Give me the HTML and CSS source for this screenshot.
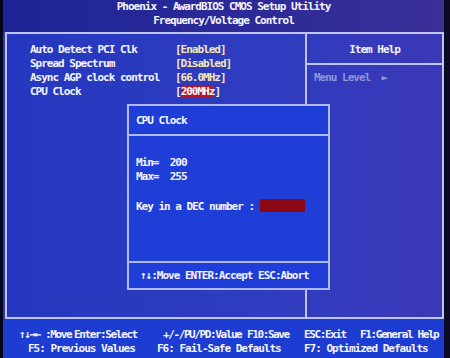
FILE: index.html
```html
<!DOCTYPE html>
<html lang="en">

<head>
    <meta charset="UTF-8">
    <meta name="viewport" content="width=device-width, initial-scale=1.0">
    <title>Frequency/Voltage Control</title>
    <link rel="stylesheet" href="styles.css">
</head>

<body>
    <div class="screen">
        <header class="title">
            <div>Phoenix - AwardBIOS CMOS Setup Utility</div>
            <div>Frequency/Voltage Control</div>
        </header>

        <main class="frame">
            <section class="items">
                <div class="row"><span class="name">Auto Detect PCI Clk</span><span class="val">[Enabled]</span></div>
                <div class="row"><span class="name">Spread Spectrum</span><span class="val">[Disabled]</span></div>
                <div class="row"><span class="name">Async AGP clock control</span><span class="val">[66.0MHz]</span></div>
                <div class="row"><span class="name">CPU Clock</span><span class="val">[<span class="sel">200MHz</span>]</span></div>
            </section>
            <aside class="help">
                <div class="help-head">Item Help</div>
                <div class="help-body">Menu Level  ►</div>
            </aside>
        </main>

        <footer class="keys">
            <div class="keyline top">
                <span>↑↓→← :Move</span>
                <span>Enter:Select</span>
                <span>+/-/PU/PD:Value</span>
                <span>F10:Save</span>
                <span>ESC:Exit</span>
                <span>F1:General Help</span>
            </div>
            <div class="keyline bottom">
                <span>F5: Previous Values</span>
                <span>F6: Fail-Safe Defaults</span>
                <span>F7: Optimized Defaults</span>
            </div>
        </footer>

        <div class="dialog">
            <div class="dialog-title">CPU Clock</div>
            <div class="dialog-body">
                <div class="line">Min=  200</div>
                <div class="line">Max=  255</div>
                <div class="line entry">Key in a DEC number : <span class="input"></span></div>
            </div>
            <div class="dialog-keys">↑↓:Move ENTER:Accept ESC:Abort</div>
        </div>
    </div>
</body>

</html>
```

FILE: styles.css
```css
body {
    margin: 0;
    background: #000;
}

.screen {
    position: relative;
    width: 450px;
    height: 358px;
    box-sizing: border-box;
    border-left: 3px solid #06061a;
    border-right: 6px solid #0c0a24;
    background: linear-gradient(to right, #2538bf, #2f3cc0 60%, #3a38b6);
    font-family: 'DejaVu Sans Mono', monospace;
    font-weight: bold;
    font-size: 11px;
    letter-spacing: -1px;
    line-height: 14px;
    color: #f4f4ff;
    white-space: nowrap;
    overflow: hidden;
}

.line,
.help-body {
    white-space: pre;
}

.title {
    height: 32px;
    text-align: center;
    background: linear-gradient(to right, #1d2496, #2c2a98 55%, #3b2f98);
}

.frame {
    display: flex;
    height: 287px;
    margin-left: 2px;
    box-sizing: border-box;
    border: 2px solid #c0c4f0;
}

.items {
    width: 298px;
    padding: 9px 0 0 23px;
    box-sizing: border-box;
}

.row {
    display: flex;
}

.name {
    width: 145px;
}

.val {
    color: #f6e8b4;
}

.sel {
    background: #b3162a;
    color: #fff;
}

.help {
    flex: 1;
    border-left: 2px solid #c0c4f0;
}

.help-head {
    padding: 9px 0 6px;
    text-align: center;
    border-bottom: 2px solid #c0c4f0;
}

.help-body {
    padding: 6px 0 0 7px;
    color: #8e94d8;
}

.keys {
    height: 39px;
    padding: 9px 0 0 16px;
    background: #1d3cd2;
}

.keyline {
    display: grid;
}

.keyline.top {
    letter-spacing: -1.4px;
    grid-template-columns: 55px 89px 84px 57px 56px auto;
}

.keyline.bottom {
    margin-left: 9px;
    grid-template-columns: 129px 147px auto;
}

.dialog {
    position: absolute;
    left: 124px;
    top: 104px;
    width: 203px;
    height: 186px;
    box-sizing: border-box;
    display: flex;
    flex-direction: column;
    border: 2px solid #b0b8f4;
    background: #1f3ed8;
}

.dialog-title {
    padding: 8px 0 6px 7px;
    border-bottom: 2px solid #b0b8f4;
}

.dialog-body {
    flex: 1;
    padding: 20px 0 0 7px;
}

.entry {
    margin-top: 15px;
}

.input {
    display: inline-block;
    width: 45px;
    height: 13px;
    vertical-align: -2px;
    background: #8c0814;
}

.dialog-keys {
    padding: 6px 0 5px 11px;
    border-top: 2px solid #b0b8f4;
}
```
